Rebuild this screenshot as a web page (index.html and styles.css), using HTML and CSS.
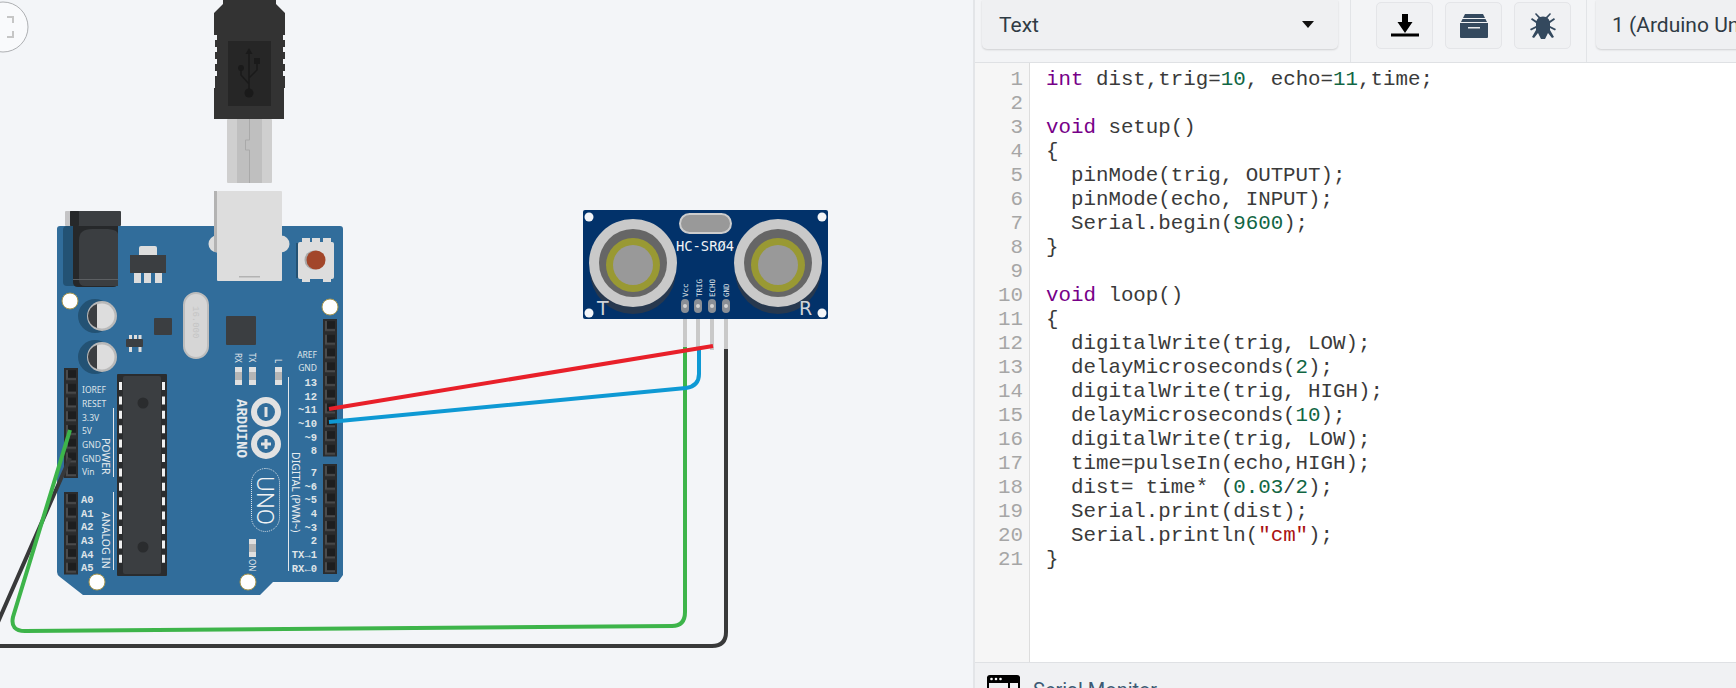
FILE: index.html
```html
<!DOCTYPE html>
<html lang="en">
<head>
    <meta charset="UTF-8">
    <title>Circuit editor</title>
    <link rel="stylesheet" href="styles.css">
</head>
<body>
    <div class="canvas">
        <svg class="circuit" width="973" height="688" viewBox="0 0 973 688">
            <defs>
                <pattern id="holes" x="0" y="0" width="14" height="13.75" patternUnits="userSpaceOnUse">
                    <rect width="14" height="13.75" fill="#2b2c2d"/>
                    <rect x="2" y="2" width="10" height="10" fill="#4a4b4c"/>
                    <rect x="4" y="2" width="8" height="8" fill="#1d1e1f"/>
                </pattern>
            </defs>

            <!-- zoom button -->
            <circle class="zoom-btn" cx="3" cy="27" r="25"/>
            <path class="zoom-tick" d="M7 17H13V23M13 31V37H7"/>

            <!-- usb plug -->
            <path class="plug" d="M223 0H276V4L285 13V35H283V40H285V47H283V52H285V59H283V64H285V71H283V76H285V88H284V119H214V88H215V76H217V71H215V64H217V59H215V52H217V47H215V40H217V35H214V13L223 4Z"/>
            <rect class="plug-inner" x="228" y="41" width="43" height="65"/>
            <path class="usb-line" d="M249 52V92M249 84L241 75V68M249 78L257 70V62"/>
            <path class="usb-mark" d="M249 48L252.5 54H245.500Z"/>
            <circle class="usb-mark" cx="249" cy="93" r="4.500"/>
            <circle class="usb-mark" cx="241" cy="68" r="3"/>
            <rect class="usb-mark" x="254" y="58" width="6" height="6"/>
            <rect class="metal" x="227" y="119" width="45" height="64" rx="1"/>
            <rect class="metal-mid" x="237" y="119" width="25" height="64"/>
            <path class="metal-line" d="M249.500 119V140H245.500V150H249.500V183"/>

            <!-- arduino board -->
            <path class="board" d="M60 226H340Q343 226 343 229V575L338 582H273L260 595H83L60 577Q57 575 57 572V229Q57 226 60 226Z"/>

            <!-- barrel jack -->
            <rect class="jack-shadow" x="63" y="226" width="20" height="60" rx="4"/>
            <rect class="jack-lite" x="65" y="211" width="10" height="15" rx="1"/>
            <rect class="chip" x="70" y="211" width="51" height="15" rx="1"/>
            <rect class="jack-dark" x="70" y="211" width="9" height="15" rx="1"/>
            <path class="jack-dark" d="M73 226H118V282Q118 287 113 287H78Q73 287 73 282Z"/>
            <path class="chip" d="M79 240Q79 229 92 229H108Q118 230 118 234V286H85Q79 286 79 280Z"/>
            <rect class="jack-line" x="73" y="279" width="45" height="1"/>

            <!-- regulator -->
            <rect class="silver" x="139" y="246" width="18" height="12" rx="2"/>
            <rect class="chip" x="130" y="255" width="36" height="18"/>
            <path class="silver" d="M134 273H141V283H134ZM144 273H151V283H144ZM155 273H162V283H155Z"/>

            <!-- usb port -->
            <circle class="silver" cx="217" cy="244" r="8.500"/>
            <circle class="silver" cx="281" cy="244" r="8.500"/>
            <rect class="silver" x="217" y="191" width="65" height="90" rx="1"/>
            <rect class="port-edge" x="214" y="191" width="3" height="61"/>
            <rect class="port-edge" x="239" y="276" width="21" height="1.500"/>

            <!-- reset button -->
            <rect class="jack-shadow" x="296" y="243" width="20" height="35"/>
            <path class="silver" d="M302 238H310V243H302ZM312 238H320V243H312ZM323 238H331V243H323ZM302 278H310V282H302ZM323 278H331V282H323Z"/>
            <rect class="silver" x="298" y="242" width="36" height="37" rx="2"/>
            <circle class="btn-shade" cx="314" cy="260" r="9.500"/>
            <circle class="btn-red" cx="316" cy="260" r="9.500"/>

            <!-- mounting holes -->
            <circle class="hole" cx="70" cy="301" r="8"/>
            <circle class="hole" cx="330" cy="307" r="8"/>
            <circle class="hole" cx="97" cy="582" r="8"/>
            <circle class="hole" cx="248" cy="582" r="8"/>

            <!-- capacitors -->
            <circle class="jack-shadow" cx="95" cy="316" r="17"/>
            <circle class="cap" cx="102" cy="316" r="15"/>
            <circle class="silver" cx="102" cy="316" r="12.500"/>
            <path class="chip" d="M97 304A12.500 12.500 0 0 0 97 328Z"/>
            <circle class="jack-shadow" cx="95" cy="357" r="17"/>
            <circle class="cap" cx="102" cy="357" r="15"/>
            <circle class="silver" cx="102" cy="357" r="12.500"/>
            <path class="chip" d="M97 345A12.500 12.500 0 0 0 97 369Z"/>

            <!-- small parts -->
            <rect class="chip" x="154" y="318" width="18" height="17" rx="1"/>
            <path class="silver" d="M129 335H132V340H129ZM134 335H137V340H134ZM138.500 335H141.500V340H138.500ZM129 347H132V352H129ZM138.500 347H141.500V352H138.500Z"/>
            <rect class="chip" x="126" y="339" width="17" height="8" rx="1"/>
            <rect class="crystal" x="184" y="293" width="24" height="65" rx="12"/>
            <text class="crystal-text" transform="translate(193 306) rotate(90)">16.000</text>
            <rect class="chip" x="226" y="316" width="30" height="29" rx="1"/>

            <!-- leds -->
            <text class="tiny" transform="translate(235 353) rotate(90)">RX</text>
            <text class="tiny" transform="translate(249 353) rotate(90)">TX</text>
            <text class="tiny" transform="translate(275 359) rotate(90)">L</text>
            <rect class="led" x="235" y="367" width="7" height="18"/>
            <rect class="led-mid" x="235" y="372" width="7" height="8"/>
            <rect class="led" x="249" y="367" width="7" height="18"/>
            <rect class="led-mid" x="249" y="372" width="7" height="8"/>
            <rect class="led" x="275" y="367" width="7" height="18"/>
            <rect class="led-mid" x="275" y="372" width="7" height="8"/>
            <rect class="led" x="249" y="539" width="7" height="18"/>
            <rect class="led-mid" x="249" y="544" width="7" height="8"/>
            <text class="tiny" transform="translate(249 559) rotate(90)">ON</text>

            <!-- atmega -->
            <rect class="chip-outer" x="117" y="374" width="50" height="202" rx="1"/>
            <rect class="chip" x="123" y="376" width="38" height="198" rx="2"/>
            <line class="chip-pin" x1="120.500" y1="382" x2="120.500" y2="569"/>
            <line class="chip-pin" x1="163.500" y1="382" x2="163.500" y2="569"/>
            <circle class="chip-outer" cx="143" cy="403" r="5.500"/>
            <circle class="chip-outer" cx="143" cy="547" r="5.500"/>

            <!-- pin headers -->
            <g transform="translate(64 368)"><rect width="14" height="110" fill="url(#holes)"/></g>
            <g transform="translate(64 492)"><rect width="14" height="82.500" fill="url(#holes)"/></g>
            <g transform="translate(323 319)"><rect width="14" height="137.500" fill="url(#holes)"/></g>
            <g transform="translate(323 464)"><rect width="14" height="110" fill="url(#holes)"/></g>

            <!-- left labels -->
            <text class="pin-sans" x="82" y="393">IOREF</text>
            <text class="pin-sans" x="82" y="407">RESET</text>
            <text class="pin-sans" x="82" y="421">3.3V</text>
            <text class="pin-sans" x="82" y="434">5V</text>
            <text class="pin-sans" x="82" y="448">GND</text>
            <text class="pin-sans" x="82" y="462">GND</text>
            <text class="pin-sans" x="82" y="475">Vin</text>
            <text class="pin-mono" x="81" y="503">A0</text>
            <text class="pin-mono" x="81" y="517">A1</text>
            <text class="pin-mono" x="81" y="530">A2</text>
            <text class="pin-mono" x="81" y="544">A3</text>
            <text class="pin-mono" x="81" y="558">A4</text>
            <text class="pin-mono" x="81" y="571">A5</text>
            <text class="group-label" transform="translate(102 438) rotate(90)">POWER</text>
            <text class="group-label" transform="translate(102 512) rotate(90)">ANALOG IN</text>
            <path class="rule" d="M113.500 408V477M113.500 492V570M288.500 377V571"/>

            <!-- right labels -->
            <text class="pin-sans end" x="317" y="358">AREF</text>
            <text class="pin-sans end" x="317" y="371">GND</text>
            <text class="pin-mono end" x="317" y="386">13</text>
            <text class="pin-mono end" x="317" y="400">12</text>
            <text class="pin-mono end" x="317" y="413">~11</text>
            <text class="pin-mono end" x="317" y="427">~10</text>
            <text class="pin-mono end" x="317" y="441">~9</text>
            <text class="pin-mono end" x="317" y="454">8</text>
            <text class="pin-mono end" x="317" y="476">7</text>
            <text class="pin-mono end" x="317" y="490">~6</text>
            <text class="pin-mono end" x="317" y="503">~5</text>
            <text class="pin-mono end" x="317" y="517">4</text>
            <text class="pin-mono end" x="317" y="531">~3</text>
            <text class="pin-mono end" x="317" y="544">2</text>
            <text class="pin-mono end" x="317" y="558">TX→1</text>
            <text class="pin-mono end" x="317" y="572">RX←0</text>
            <text class="group-label" transform="translate(292 452) rotate(90)">DIGITAL (PWM~)</text>

            <!-- logo -->
            <text class="brand" transform="translate(237 399) rotate(90)">ARDUINO</text>
            <circle class="logo" cx="266" cy="412" r="12"/>
            <circle class="logo" cx="266" cy="444" r="12"/>
            <rect class="logo-mark" x="264.500" y="407" width="3" height="10"/>
            <path class="logo-mark" d="M264.500 439H267.500V442.500H271V445.500H267.500V449H264.500V445.500H261V442.500H264.500Z"/>
            <rect class="uno-pill" x="251.500" y="468.500" width="28" height="63" rx="14"/>
            <text class="uno" transform="translate(257 476) rotate(90)">UNO</text>

            <!-- hc-sr04 -->
            <rect class="sensor" x="583" y="210" width="245" height="109" rx="2"/>
            <circle class="hole-plain" cx="589" cy="217" r="4.500"/>
            <circle class="hole-plain" cx="822" cy="217" r="4.500"/>
            <circle class="hole-plain" cx="589" cy="313" r="4.500"/>
            <circle class="hole-plain" cx="822" cy="313" r="4.500"/>
            <rect class="sensor-crystal" x="680" y="214" width="51" height="19" rx="9.500"/>
            <circle class="tr-shadow" cx="633" cy="271" r="43"/>
            <circle class="tr-shadow" cx="778" cy="271" r="43"/>
            <text class="sensor-corner" x="597" y="315">T</text>
            <text class="sensor-corner" x="799" y="315">R</text>
            <circle class="tr-ring" cx="633" cy="263" r="44"/>
            <circle class="tr-dark" cx="633" cy="263" r="34"/>
            <circle class="tr-yellow" cx="633" cy="265" r="27"/>
            <circle class="tr-core" cx="633" cy="265" r="20"/>
            <circle class="tr-ring" cx="778" cy="263" r="44"/>
            <circle class="tr-dark" cx="778" cy="263" r="34"/>
            <circle class="tr-yellow" cx="778" cy="265" r="27"/>
            <circle class="tr-core" cx="778" cy="265" r="20"/>
            <text class="sensor-name" x="705" y="251">HC-SRØ4</text>
            <text class="sensor-pin" transform="translate(688 297) rotate(-90)">Vcc</text>
            <text class="sensor-pin" transform="translate(702 297) rotate(-90)">TRIG</text>
            <text class="sensor-pin" transform="translate(715 297) rotate(-90)">ECHO</text>
            <text class="sensor-pin" transform="translate(729 297) rotate(-90)">GND</text>
            <rect class="pad" x="681" y="299" width="8" height="14" rx="4"/>
            <rect class="pad" x="694" y="299" width="8" height="14" rx="4"/>
            <rect class="pad" x="708" y="299" width="8" height="14" rx="4"/>
            <rect class="pad" x="722" y="299" width="8" height="14" rx="4"/>
            <circle class="pad-dot" cx="685" cy="306" r="2"/>
            <circle class="pad-dot" cx="698" cy="306" r="2"/>
            <circle class="pad-dot" cx="712" cy="306" r="2"/>
            <circle class="pad-dot" cx="726" cy="306" r="2"/>
            <path class="sensor-leg" d="M685 319V350M698 319V350M712 319V350M726 319V350"/>

            <!-- wires -->
            <path class="wire wire-black" d="M70 458L-2 622M-2 646H712Q726 646 726 632V349"/>
            <path class="wire wire-green" d="M70 430L13 617Q10 631 25 631L672 626Q685 626 685 612V347"/>
            <path class="wire wire-blue" d="M329 422L686 388Q699 386 699 374V347"/>
            <path class="wire wire-red" d="M329 409L713 346"/>
        </svg>
    </div>

    <div class="panel">
        <div class="toolbar">
            <div class="select select-mode">
                <span>Text</span>
                <i class="caret"></i>
            </div>
            <div class="tool-group">
                <div class="tool-btn">
                    <svg width="28" height="24" viewBox="0 0 28 24"><path fill="#000" d="M11 0H17V8H21.500L14 19L6.500 8H11ZM0 19.500H28V22.500H0Z"/></svg>
                </div>
                <div class="tool-btn">
                    <svg width="28" height="24" viewBox="0 0 28 24"><path fill="#34495e" d="M5 0H23L25 4H3ZM2.500 5H25.500L27 8H1ZM0 9H28V23Q28 24 27 24H1Q0 24 0 23Z"/><rect x="8" y="13" width="12" height="1.500" fill="#e8eaec"/></svg>
                </div>
                <div class="tool-btn">
                    <svg width="26" height="26" viewBox="0 0 26 26"><path fill="#34495e" d="M6 0L10 4Q13 3 16 4L20 0L21 1L17.500 5Q19 6 19.500 8L24 5L25 6.500L20 10V13L26 16L25 17.500L20 15V17L24 24L22 25L18 20L15 26H11L8 20L4 25L2 24L6 17V15L1 17.500L0 16L6 13V10L1 6.500L2 5L6.500 8Q7 6 8.500 5L5 1Z"/></svg>
                </div>
            </div>
            <div class="select select-board">
                <span>1 (Arduino Uno R3)</span>
            </div>
        </div>

        <div class="editor">
            <div class="gutter">
                <div>1</div><div>2</div><div>3</div><div>4</div><div>5</div><div>6</div><div>7</div>
                <div>8</div><div>9</div><div>10</div><div>11</div><div>12</div><div>13</div><div>14</div>
                <div>15</div><div>16</div><div>17</div><div>18</div><div>19</div><div>20</div><div>21</div>
            </div>
            <pre class="code"><span class="kw">int</span> dist,trig=<span class="num">10</span>, echo=<span class="num">11</span>,time;

<span class="kw">void</span> setup()
{
  pinMode(trig, OUTPUT);
  pinMode(echo, INPUT);
  Serial.begin(<span class="num">9600</span>);
}

<span class="kw">void</span> loop()
{
  digitalWrite(trig, LOW);
  delayMicroseconds(<span class="num">2</span>);
  digitalWrite(trig, HIGH);
  delayMicroseconds(<span class="num">10</span>);
  digitalWrite(trig, LOW);
  time=pulseIn(echo,HIGH);
  dist= time* (<span class="num">0.03</span>/<span class="num">2</span>);
  Serial.print(dist);
  Serial.println(<span class="str">"cm"</span>);
}</pre>
        </div>

        <div class="serial-bar">
            <svg width="33" height="30" viewBox="0 0 33 30">
                <path fill="none" stroke="#000" stroke-width="2" d="M1 3H32V29H1ZM22 8V29"/>
                <path fill="#000" d="M3 0H30Q33 0 33 3V8H0V3Q0 0 3 0Z"/>
                <circle cx="4.500" cy="4" r="1.300" fill="#fff"/>
                <circle cx="9" cy="4" r="1.300" fill="#fff"/>
                <circle cx="13.500" cy="4" r="1.300" fill="#fff"/>
            </svg>
            <span>Serial Monitor</span>
        </div>
    </div>
</body>
</html>
```
FILE: styles.css
```css
/* page */
html, body {
    height: 100%;
}

body {
    margin: 0;
    display: flex;
    height: 688px;
    overflow: hidden;
    background-color: #f3f5f8;
    font-family: Roboto, sans-serif;
}

.canvas {
    width: 973px;
    flex-shrink: 0;
}

.circuit {
    display: block;
}

/* circuit parts */
.zoom-btn { fill: #f9fafc; stroke: #aeb0b3; stroke-width: 1; }
.zoom-tick { fill: none; stroke: #c6c6c6; stroke-width: 2; }

.plug { fill: #333333; }
.plug-inner { fill: #262626; }
.usb-line { fill: none; stroke: #1a1a1a; stroke-width: 1.500; }
.usb-mark { fill: #1a1a1a; }
.metal { fill: #cfcfcf; }
.metal-mid { fill: #bfbfbf; }
.metal-line { fill: none; stroke: #a9a9a9; stroke-width: 1; }

.board { fill: #316d9b; }
.chip { fill: #3b3e41; }
.chip-outer { fill: #2a2c2e; }
.chip-pin { stroke: #f0f0f0; stroke-width: 3; stroke-dasharray: 8 6.400; }
.jack-shadow { fill: #235274; }
.jack-lite { fill: #c4c4c6; }
.jack-dark { fill: #26282a; }
.jack-line { fill: #5c5f62; }
.silver { fill: #dddddd; }
.port-edge { fill: #b3b3b3; }
.btn-shade { fill: #a9a9a9; }
.btn-red { fill: #a2462a; }
.hole { fill: #ffffff; stroke: #a8964e; stroke-width: 1; }
.hole-plain { fill: #f3f5f8; }
.cap { fill: #b9b9b9; }
.crystal { fill: #d6d6d6; stroke: #bdbdbd; stroke-width: 2; }
.crystal-text { font: 9px "Liberation Mono", monospace; fill: #c4c4c4; }
.led { fill: #e0e0e0; }
.led-mid { fill: #b5b5b5; }
.rule { fill: none; stroke: #e4e8ec; stroke-width: 1; }

/* board labels */
.tiny { font: 8px "Noto Sans", sans-serif; fill: #e4e8ec; }
.pin-sans { font: 8.500px "Noto Sans", sans-serif; fill: #dfe4e8; }
.pin-mono { font: bold 10.500px "Liberation Mono", monospace; fill: #dfe4e8; }
.end { text-anchor: end; }
.group-label { font: 10.500px "Noto Sans", sans-serif; fill: #e8ecef; }
.brand { font: bold 14px "Liberation Mono", monospace; fill: #e4e8ec; }
.logo { fill: none; stroke: #e2e2e2; stroke-width: 6; }
.logo-mark { fill: #e2e2e2; }
.uno-pill { fill: none; stroke: #e4e8ec; stroke-width: 1; stroke-dasharray: 1 1; }
.uno { font: 300 24px Roboto, sans-serif; fill: #f0f2f4; }

/* sensor */
.sensor { fill: #02326a; }
.sensor-crystal { fill: #999999; stroke: #cdcdcd; stroke-width: 2; }
.sensor-corner { font: 19px "DejaVu Sans", sans-serif; fill: #cfd3d8; }
.sensor-name { font: 13.800px "DejaVu Sans Mono", monospace; fill: #f0f2f4; text-anchor: middle; }
.sensor-pin { font: 7.500px "DejaVu Sans Mono", monospace; fill: #dfe3e8; }
.tr-shadow { fill: #27384e; }
.tr-ring { fill: #c9c9c9; }
.tr-dark { fill: #666666; }
.tr-yellow { fill: #999933; }
.tr-core { fill: #999999; }
.pad { fill: #8a8f96; }
.pad-dot { fill: #d4d4d4; }
.sensor-leg { fill: none; stroke: #c9c9c9; stroke-width: 4; }

.wire { fill: none; stroke-width: 4; }
.wire-black { stroke: #38393a; }
.wire-green { stroke: #3db44a; }
.wire-blue { stroke: #0e99d4; }
.wire-red { stroke: #e8202a; }

/* right panel */
.panel {
    flex: 1;
    min-width: 0;
    display: flex;
    flex-direction: column;
    overflow: hidden;
    background-color: #f1f2f4;
    border-left: 2px solid #e3e5e8;
}

.toolbar {
    display: flex;
    height: 62px;
    flex-shrink: 0;
    padding-left: 7px;
    box-sizing: border-box;
    background-color: #f3f4f6;
}

.select {
    display: flex;
    align-items: center;
    height: 49px;
    box-sizing: border-box;
    background-color: #eff0f2;
    border-radius: 0 0 5px 5px;
    box-shadow: 0 1px 2px rgba(0, 0, 0, 0.15);
    font-size: 21px;
    color: #2f3b44;
    white-space: nowrap;
}

.select-mode {
    width: 356px;
    flex-shrink: 0;
    padding: 0 24px 0 17px;
    justify-content: space-between;
}

.caret {
    width: 0;
    height: 0;
    border-left: 6px solid transparent;
    border-right: 6px solid transparent;
    border-top: 7px solid #111;
}

.tool-group {
    display: flex;
    gap: 12px;
    height: 62px;
    flex-shrink: 0;
    box-sizing: border-box;
    margin-left: 12px;
    padding: 2px 15px 0 25px;
    border-left: 1px solid #e2e4e7;
    border-right: 1px solid #e2e4e7;
}

.tool-btn {
    display: flex;
    align-items: center;
    justify-content: center;
    width: 57px;
    height: 47px;
    box-sizing: border-box;
    background-color: #f0f1f3;
    border: 1px solid #e4e5e8;
    border-radius: 5px;
}

.select-board {
    margin-left: 9px;
    padding-left: 16px;
    width: 300px;
    flex-shrink: 0;
}

.editor {
    display: flex;
    height: 601px;
    flex-shrink: 0;
    background-color: #fff;
    border-top: 1px solid #dfe1e4;
    border-bottom: 1px solid #dfe1e4;
    box-sizing: border-box;
}

.gutter {
    width: 55px;
    flex-shrink: 0;
    box-sizing: border-box;
    padding: 5px 6px 0 0;
    background-color: #f6f6f6;
    border-right: 1px solid #ddd;
    text-align: right;
    font: 20.800px/24px "Liberation Mono", monospace;
    color: #a6a6a6;
}

.code {
    margin: 0;
    padding: 5px 0 0 16px;
    font: 20.800px/24px "Liberation Mono", monospace;
    color: #3a3a3a;
}

.kw { color: #770088; }
.num { color: #116644; }
.str { color: #aa1111; }

.serial-bar {
    flex: 1;
    display: flex;
    gap: 13px;
    padding: 12px 0 0 12px;
    background-color: #f0f1f3;
    font-size: 20px;
    color: #3d5a73;
    line-height: 30px;
}

.serial-bar svg {
    flex-shrink: 0;
}
```
